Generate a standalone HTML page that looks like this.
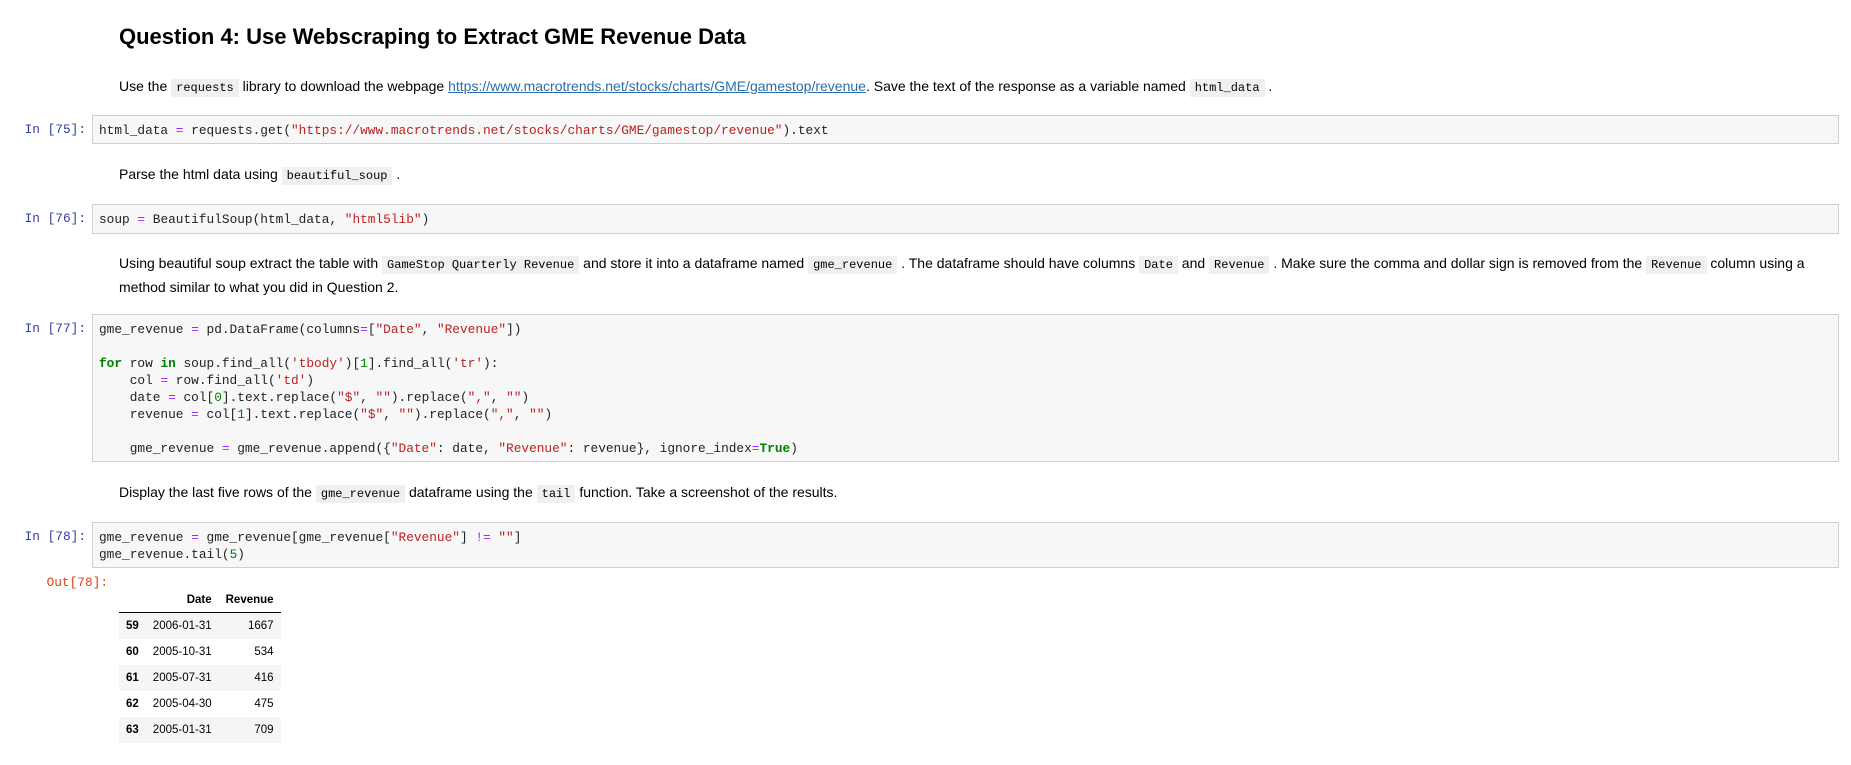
<!DOCTYPE html>
<html><head><meta charset="utf-8"><style>
body{margin:0;width:1851px;height:765px;background:#fff;position:relative;overflow:hidden;font-family:"Liberation Sans",Arial,sans-serif;color:#000}
h1{position:absolute;left:119px;top:24px;margin:0;font-size:22px;font-weight:bold;white-space:nowrap}
.p{position:absolute;left:119px;font-size:14px;line-height:22px;white-space:nowrap}
.p code{font-family:"Liberation Mono",monospace;font-size:12px;background:#eff0f1;padding:2px 5px}
a{color:#296eaa;text-decoration:underline}
.cell{position:absolute;left:92px;width:1747px;background:#f7f7f7;border:1px solid #cfcfcf;box-sizing:border-box}
.cell pre{margin:0;padding:6px 6px;font-family:"Liberation Mono",monospace;font-size:12.8px;line-height:17px;white-space:pre;color:#222}
.pr{position:absolute;font-family:"Liberation Mono",monospace;font-size:12.8px;color:#303f9f;width:86px;text-align:right}
.s{color:#ba2121}.o{color:#aa22ff}.k{color:#008000;font-weight:bold}.n{color:#008000}
table{position:absolute;left:119px;top:588px;border-collapse:collapse;font-size:11.5px}
td,th{padding:0 7px;height:26px;text-align:right}
thead th{height:24px;border-bottom:1px solid #000}
tbody tr:nth-child(odd){background:#f5f5f5}
</style></head><body>
<h1>Question 4: Use Webscraping to Extract GME Revenue Data</h1>
<div class="p" style="top:75px">Use the <code>requests</code> library to download the webpage <a>https://www.macrotrends.net/stocks/charts/GME/gamestop/revenue</a>. Save the text of the response as a variable named <code>html_data</code> .</div>
<div class="pr" style="top:122px;left:0">In [75]:</div>
<div class="cell" style="top:115px;height:29px"><pre>html_data <span class="o">=</span> requests.get(<span class="s">"https://www.macrotrends.net/stocks/charts/GME/gamestop/revenue"</span>).text</pre></div>
<div class="p" style="top:163px">Parse the html data using <code>beautiful_soup</code> .</div>
<div class="pr" style="top:211px;left:0">In [76]:</div>
<div class="cell" style="top:204px;height:30px"><pre>soup <span class="o">=</span> BeautifulSoup(html_data, <span class="s">"html5lib"</span>)</pre></div>
<div class="p" style="top:252px;line-height:22px">Using beautiful soup extract the table with <code>GameStop Quarterly Revenue</code> and store it into a dataframe named <code>gme_revenue</code> . The dataframe should have columns <code>Date</code> and <code>Revenue</code> . Make sure the comma and dollar sign is removed from the <code>Revenue</code> column using a<br>method similar to what you did in Question 2.</div>
<div class="pr" style="top:321px;left:0">In [77]:</div>
<div class="cell" style="top:314px;height:148px"><pre>gme_revenue <span class="o">=</span> pd.DataFrame(columns<span class="o">=</span>[<span class="s">"Date"</span>, <span class="s">"Revenue"</span>])

<span class="k">for</span> row <span class="k">in</span> soup.find_all(<span class="s">'tbody'</span>)[<span class="n">1</span>].find_all(<span class="s">'tr'</span>):
    col <span class="o">=</span> row.find_all(<span class="s">'td'</span>)
    date <span class="o">=</span> col[<span class="n">0</span>].text.replace(<span class="s">"$"</span>, <span class="s">""</span>).replace(<span class="s">","</span>, <span class="s">""</span>)
    revenue <span class="o">=</span> col[<span class="n">1</span>].text.replace(<span class="s">"$"</span>, <span class="s">""</span>).replace(<span class="s">","</span>, <span class="s">""</span>)

    gme_revenue <span class="o">=</span> gme_revenue.append({<span class="s">"Date"</span>: date, <span class="s">"Revenue"</span>: revenue}, ignore_index<span class="o">=</span><span class="k">True</span>)</pre></div>
<div class="p" style="top:481px">Display the last five rows of the <code>gme_revenue</code> dataframe using the <code>tail</code> function. Take a screenshot of the results.</div>
<div class="pr" style="top:529px;left:0">In [78]:</div>
<div class="cell" style="top:522px;height:46px"><pre>gme_revenue <span class="o">=</span> gme_revenue[gme_revenue[<span class="s">"Revenue"</span>] <span class="o">!=</span> <span class="s">""</span>]
gme_revenue.tail(<span class="n">5</span>)</pre></div>
<div class="pr" style="top:575px;left:22px;color:#d84315">Out[78]:</div>
<table>
<thead><tr><th></th><th>Date</th><th>Revenue</th></tr></thead>
<tbody>
<tr><th>59</th><td>2006-01-31</td><td>1667</td></tr>
<tr><th>60</th><td>2005-10-31</td><td>534</td></tr>
<tr><th>61</th><td>2005-07-31</td><td>416</td></tr>
<tr><th>62</th><td>2005-04-30</td><td>475</td></tr>
<tr><th>63</th><td>2005-01-31</td><td>709</td></tr>
</tbody></table>
</body></html>
